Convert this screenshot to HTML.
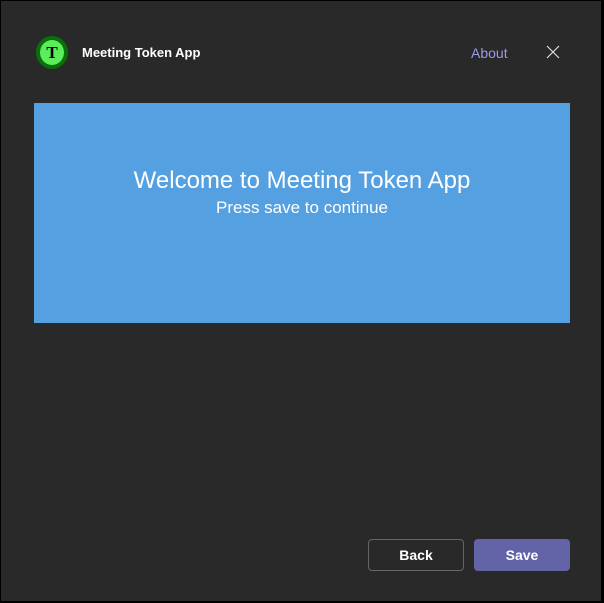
<!DOCTYPE html>
<html><head><meta charset="utf-8"><style>
html,body{margin:0;padding:0;}
body{width:604px;height:603px;background:#000;position:relative;overflow:hidden;font-family:"Liberation Sans",sans-serif;}
.win{position:absolute;left:1px;top:1px;width:600px;height:600px;background:#292929;}
.logo{position:absolute;left:36px;top:36px;width:32px;height:33px;border-radius:50%;background:#0a6e0a;}
.logo .in{position:absolute;left:4px;top:4px;width:24px;height:25px;border-radius:50%;background:#5aef5a;text-align:center;line-height:26px;font-family:"Liberation Serif",serif;font-weight:bold;font-size:17px;color:#000;}
.title{position:absolute;left:82px;top:45px;color:#fff;font-weight:bold;font-size:13px;}
.about{position:absolute;left:471px;top:45px;color:#9a9ae6;font-size:14px;}
.x{position:absolute;left:546px;top:45px;}
.hero{position:absolute;left:34px;top:103px;width:536px;height:220px;background:#55a0e0;color:#fff;text-align:center;}
.h1{margin-top:64px;font-size:24px;}
.h2{font-size:17px;margin-top:3px;}
.btn{position:absolute;top:539px;width:96px;height:32px;box-sizing:border-box;border-radius:4px;color:#fff;font-weight:bold;font-size:14px;text-align:center;line-height:31px;}
.back{left:368px;border:1px solid #666;background:#292929;}
.save{left:474px;background:#6264a7;line-height:33px;}
</style></head><body>
<div class="win">
</div>
<div class="logo"><div class="in">T</div></div>
<div class="title">Meeting Token App</div>
<div class="about">About</div>
<svg class="x" width="14" height="14" viewBox="0 0 14 14"><path d="M1 1L13 13M13 1L1 13" stroke="#ddd" stroke-width="1.2"/></svg>
<div class="hero"><div class="h1">Welcome to Meeting Token App</div><div class="h2">Press save to continue</div></div>
<div class="btn back">Back</div>
<div class="btn save">Save</div>
</body></html>
